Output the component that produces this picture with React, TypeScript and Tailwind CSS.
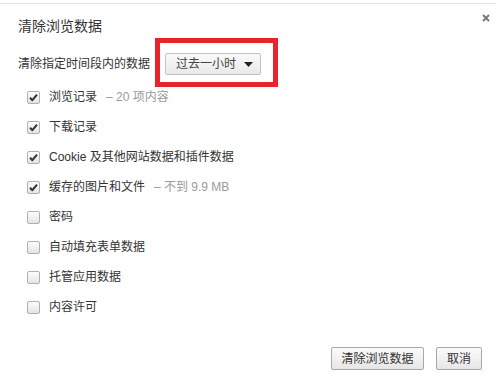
import React from 'react';

const font = { fontFamily: '"Liberation Sans", "Noto Sans CJK SC", sans-serif' };

interface Item {
  label: string;
  note?: string;
  checked: boolean;
}

const items: Item[] = [
  { label: '浏览记录', note: '– 20 项内容', checked: true },
  { label: '下载记录', checked: true },
  { label: 'Cookie 及其他网站数据和插件数据', checked: true },
  { label: '缓存的图片和文件', note: '– 不到 9.9 MB', checked: true },
  { label: '密码', checked: false },
  { label: '自动填充表单数据', checked: false },
  { label: '托管应用数据', checked: false },
  { label: '内容许可', checked: false },
];

function CheckBox({ checked }: { checked: boolean }) {
  return (
    <span className="flex h-[13px] w-[13px] items-center justify-center rounded-[2px] border border-[#b0b0b0] bg-gradient-to-b from-[#fdfdfd] to-[#e4e4e4]">
      {checked && (
        <svg width="9" height="9" viewBox="0 0 9 9">
          <path d="M1 4.8 L3.4 7.2 L8 1.6" fill="none" stroke="#333" strokeWidth="2" strokeLinejoin="round" />
        </svg>
      )}
    </span>
  );
}

export default function App() {
  return (
    <div className="relative h-[382px] w-[496px] overflow-hidden bg-white text-[#333]" style={font}>
      <div className="h-[3px]" />
      <div className="border-t border-[#e2e2e2]" />

      {/* close */}
      <button className="absolute right-[6px] top-[14px] flex h-[8px] w-[8px] items-center justify-center">
        <svg width="8" height="8" viewBox="0 0 8 8">
          <path d="M1 1 L7 7 M7 1 L1 7" stroke="#7a7a7a" strokeWidth="2" />
        </svg>
      </button>

      <div className="pl-[18px] pt-[12px]">
        <h1 className="text-[14px] leading-[20px]">清除浏览数据</h1>

        <div className="mt-[17px] flex h-[22px] items-center">
          <span className="text-[12px] leading-[20px]">清除指定时间段内的数据</span>
          <div className="relative ml-[15px]">
            <button className="flex h-[22px] w-[96px] items-center rounded-[2px] border border-[#c2c2c2] bg-gradient-to-b from-[#fafafa] to-[#e9e9e9] pl-[10px] pr-[7px] text-[12px] leading-[20px] text-[#444]">
              <span>过去一小时</span>
              <svg className="ml-auto" width="9" height="5" viewBox="0 0 9 5">
                <path d="M0 0 H9 L4.5 5 Z" fill="#222" />
              </svg>
            </button>
            <div className="pointer-events-none absolute -left-[10px] -top-[15px] h-[49px] w-[123px] border-[5px] border-[#e8232a]" />
          </div>
        </div>

        <ul className="mt-[7px] pl-[9px]">
          {items.map((item) => (
            <li key={item.label} className="flex h-[30px] items-center text-[12px] leading-[20px]">
              <CheckBox checked={item.checked} />
              <span className="ml-[9px]">{item.label}</span>
              {item.note && <span className="ml-[9px] text-[#9a9a9a]">{item.note}</span>}
            </li>
          ))}
        </ul>
      </div>

      <div className="mt-[25px] flex justify-end gap-[12px] pr-[14px]">
        <button className="h-[23px] w-[93px] rounded-[2px] border border-[#a8a8a8] bg-gradient-to-b from-[#fbfbfb] to-[#e6e6e6] text-[12px] leading-[20px] text-[#333]">
          清除浏览数据
        </button>
        <button className="h-[23px] w-[46px] rounded-[2px] border border-[#a8a8a8] bg-gradient-to-b from-[#fbfbfb] to-[#e6e6e6] text-[12px] leading-[20px] text-[#333]">
          取消
        </button>
      </div>
    </div>
  );
}
